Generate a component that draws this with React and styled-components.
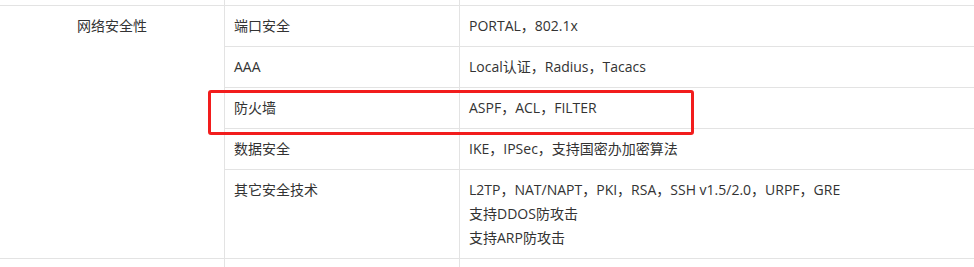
import React from "react";
import styled, { createGlobalStyle } from "styled-components";

const GlobalStyle = createGlobalStyle`
  html, body {
    margin: 0;
    padding: 0;
    background: #ffffff;
  }
  body {
    width: 974px;
    height: 267px;
    overflow: hidden;
    font-family: "Open Sans", "Noto Sans CJK SC", sans-serif;
  }
`;

const Wrap = styled.div`
  position: relative;
  width: 974px;
`;

const Table = styled.table`
  width: 100%;
  table-layout: fixed;
  border-collapse: separate;
  border-spacing: 0;
  font-size: 14px;
  color: #333333;
`;

const Cell = styled.td`
  box-sizing: border-box;
  padding: ${(p) => (p.$filler ? "0 9px" : "8px 9px")};
  height: ${(p) => (p.$filler ? `${p.$filler}px` : "auto")};
  line-height: 24px;
  vertical-align: top;
  text-align: ${(p) => (p.$center ? "center" : "left")};
  border-right: ${(p) => (p.$last ? "none" : "1px solid #e3e3e3")};
  border-bottom: ${(p) => (p.$open ? "none" : "1px solid #e3e3e3")};
`;

const Line = styled.div`
  white-space: nowrap;
`;

// Hand-drawn style highlight around one row
const Highlight = styled.div`
  position: absolute;
  left: 208px;
  top: 90px;
  width: 486px;
  height: 45px;
  box-sizing: border-box;
  border: 3px solid #f21d1d;
  border-radius: 3px;
  pointer-events: none;
`;

const rows = [
  { name: "端口安全", value: ["PORTAL，802.1x"] },
  { name: "AAA", value: ["Local认证，Radius，Tacacs"] },
  { name: "防火墙", value: ["ASPF，ACL，FILTER"] },
  { name: "数据安全", value: ["IKE，IPSec，支持国密办加密算法"] },
  {
    name: "其它安全技术",
    value: [
      "L2TP，NAT/NAPT，PKI，RSA，SSH v1.5/2.0，URPF，GRE",
      "支持DDOS防攻击",
      "支持ARP防攻击",
    ],
  },
];

export default function App() {
  return (
    <>
      <GlobalStyle />
      <Wrap>
        <Table>
          <colgroup>
            <col style={{ width: 225 }} />
            <col style={{ width: 235 }} />
            <col />
          </colgroup>
          <tbody>
            <tr>
              <Cell $filler={6} />
              <Cell $filler={6} />
              <Cell $filler={6} $last />
            </tr>
            {rows.map((r, i) => (
              <tr key={r.name}>
                {i === 0 && (
                  <Cell rowSpan={rows.length} $center>
                    网络安全性
                  </Cell>
                )}
                <Cell>{r.name}</Cell>
                <Cell $last>
                  {r.value.map((v) => (
                    <Line key={v}>{v}</Line>
                  ))}
                </Cell>
              </tr>
            ))}
            <tr>
              <Cell $filler={20} $open />
              <Cell $filler={20} $open />
              <Cell $filler={20} $open $last />
            </tr>
          </tbody>
        </Table>
        <Highlight />
      </Wrap>
    </>
  );
}
